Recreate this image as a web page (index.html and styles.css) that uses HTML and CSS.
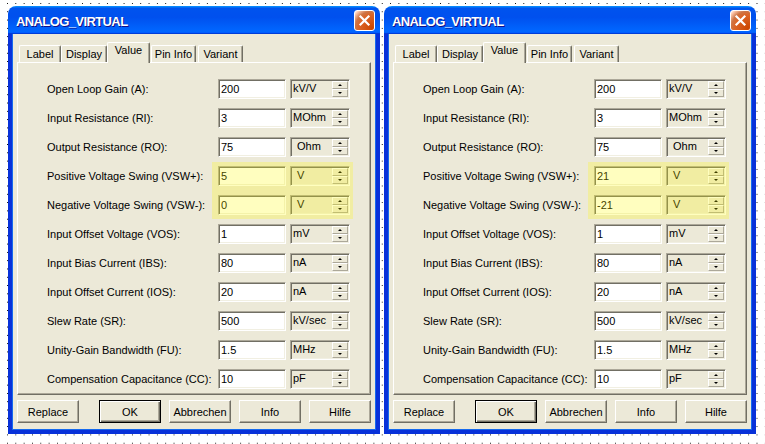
FILE: index.html
```html
<!DOCTYPE html>
<html lang="de">
<head>
  <meta charset="UTF-8" />
  <title>ANALOG_VIRTUAL</title>
  <link rel="stylesheet" href="styles.css">
</head>
<body>
  <div class="window">
    <div class="titlebar">
      <span class="title">ANALOG_VIRTUAL</span>
      <span class="close"><svg width="13" height="13" viewBox="0 0 13 13"><path d="M2.5 2.5 L10.5 10.5 M10.5 2.5 L2.5 10.5" stroke="#fff" stroke-width="2.2" stroke-linecap="square" fill="none"/></svg></span>
    </div>
    <div class="frame">
      <div class="tabs">
        <span class="tab tab-label">Label</span>
        <span class="tab tab-display">Display</span>
        <span class="tab tab-value active">Value</span>
        <span class="tab tab-pin">Pin Info</span>
        <span class="tab tab-variant">Variant</span>
      </div>
      <div class="panel">
        <div class="row"><label>Open Loop Gain (A):</label><input class="value" value="200"><div class="unit"><span>kV/V</span><span class="spin"><i class="up"></i><i class="down"></i></span></div></div>
        <div class="row"><label>Input Resistance (RI):</label><input class="value" value="3"><div class="unit"><span>MOhm</span><span class="spin"><i class="up"></i><i class="down"></i></span></div></div>
        <div class="row"><label>Output Resistance (RO):</label><input class="value" value="75"><div class="unit"><span class="pad">Ohm</span><span class="spin"><i class="up"></i><i class="down"></i></span></div></div>
        <div class="swing">
          <div class="row"><label>Positive Voltage Swing (VSW+):</label><input class="value" value="5"><div class="unit"><span class="pad">V</span><span class="spin"><i class="up"></i><i class="down"></i></span></div></div>
          <div class="row"><label>Negative Voltage Swing (VSW-):</label><input class="value" value="0"><div class="unit"><span class="pad">V</span><span class="spin"><i class="up"></i><i class="down"></i></span></div></div>
        </div>
        <div class="row"><label>Input Offset Voltage (VOS):</label><input class="value" value="1"><div class="unit"><span>mV</span><span class="spin"><i class="up"></i><i class="down"></i></span></div></div>
        <div class="row"><label>Input Bias Current (IBS):</label><input class="value" value="80"><div class="unit"><span>nA</span><span class="spin"><i class="up"></i><i class="down"></i></span></div></div>
        <div class="row"><label>Input Offset Current (IOS):</label><input class="value" value="20"><div class="unit"><span>nA</span><span class="spin"><i class="up"></i><i class="down"></i></span></div></div>
        <div class="row"><label>Slew Rate (SR):</label><input class="value" value="500"><div class="unit"><span>kV/sec</span><span class="spin"><i class="up"></i><i class="down"></i></span></div></div>
        <div class="row"><label>Unity-Gain Bandwidth (FU):</label><input class="value" value="1.5"><div class="unit"><span>MHz</span><span class="spin"><i class="up"></i><i class="down"></i></span></div></div>
        <div class="row"><label>Compensation Capacitance (CC):</label><input class="value" value="10"><div class="unit"><span>pF</span><span class="spin"><i class="up"></i><i class="down"></i></span></div></div>
      </div>
      <div class="buttons">
        <button>Replace</button>
        <button class="ok">OK</button>
        <button>Abbrechen</button>
        <button>Info</button>
        <button>Hilfe</button>
      </div>
    </div>
  </div>

  <div class="window">
    <div class="titlebar">
      <span class="title">ANALOG_VIRTUAL</span>
      <span class="close"><svg width="13" height="13" viewBox="0 0 13 13"><path d="M2.5 2.5 L10.5 10.5 M10.5 2.5 L2.5 10.5" stroke="#fff" stroke-width="2.2" stroke-linecap="square" fill="none"/></svg></span>
    </div>
    <div class="frame">
      <div class="tabs">
        <span class="tab tab-label">Label</span>
        <span class="tab tab-display">Display</span>
        <span class="tab tab-value active">Value</span>
        <span class="tab tab-pin">Pin Info</span>
        <span class="tab tab-variant">Variant</span>
      </div>
      <div class="panel">
        <div class="row"><label>Open Loop Gain (A):</label><input class="value" value="200"><div class="unit"><span>kV/V</span><span class="spin"><i class="up"></i><i class="down"></i></span></div></div>
        <div class="row"><label>Input Resistance (RI):</label><input class="value" value="3"><div class="unit"><span>MOhm</span><span class="spin"><i class="up"></i><i class="down"></i></span></div></div>
        <div class="row"><label>Output Resistance (RO):</label><input class="value" value="75"><div class="unit"><span class="pad">Ohm</span><span class="spin"><i class="up"></i><i class="down"></i></span></div></div>
        <div class="swing">
          <div class="row"><label>Positive Voltage Swing (VSW+):</label><input class="value" value="21"><div class="unit"><span class="pad">V</span><span class="spin"><i class="up"></i><i class="down"></i></span></div></div>
          <div class="row"><label>Negative Voltage Swing (VSW-):</label><input class="value" value="-21"><div class="unit"><span class="pad">V</span><span class="spin"><i class="up"></i><i class="down"></i></span></div></div>
        </div>
        <div class="row"><label>Input Offset Voltage (VOS):</label><input class="value" value="1"><div class="unit"><span>mV</span><span class="spin"><i class="up"></i><i class="down"></i></span></div></div>
        <div class="row"><label>Input Bias Current (IBS):</label><input class="value" value="80"><div class="unit"><span>nA</span><span class="spin"><i class="up"></i><i class="down"></i></span></div></div>
        <div class="row"><label>Input Offset Current (IOS):</label><input class="value" value="20"><div class="unit"><span>nA</span><span class="spin"><i class="up"></i><i class="down"></i></span></div></div>
        <div class="row"><label>Slew Rate (SR):</label><input class="value" value="500"><div class="unit"><span>kV/sec</span><span class="spin"><i class="up"></i><i class="down"></i></span></div></div>
        <div class="row"><label>Unity-Gain Bandwidth (FU):</label><input class="value" value="1.5"><div class="unit"><span>MHz</span><span class="spin"><i class="up"></i><i class="down"></i></span></div></div>
        <div class="row"><label>Compensation Capacitance (CC):</label><input class="value" value="10"><div class="unit"><span>pF</span><span class="spin"><i class="up"></i><i class="down"></i></span></div></div>
      </div>
      <div class="buttons">
        <button>Replace</button>
        <button class="ok">OK</button>
        <button>Abbrechen</button>
        <button>Info</button>
        <button>Hilfe</button>
      </div>
    </div>
  </div>
</body>
</html>
```

FILE: styles.css
```css
:root {
  --face: #ece9d8;
  --light: #ffffff;
  --shade: #aca899;
  --dark: #716f64;
  --xp-blue: #0831d9;
}

body {
  margin: 0;
  height: 444px;
  box-sizing: border-box;
  overflow: hidden;
  padding: 6px 0 0 8px;
  display: flex;
  align-items: flex-start;
  gap: 4px;
  background-color: #000;
  background-image:
    linear-gradient(90deg, transparent 1px, #fff 1px),
    linear-gradient(transparent 1px, #fff 1px);
  background-size: 8.33px 8.3px;
  background-position: 7px 3px;
  font-family: "Liberation Sans", Arial, sans-serif;
  font-size: 11px;
  color: #000;
}

.window {
  width: 372px;
  height: 428px;
  display: flex;
  flex-direction: column;
  flex: none;
}

.titlebar {
  height: 28px;
  flex: none;
  box-sizing: border-box;
  padding: 0 5px 0 8px;
  display: flex;
  align-items: center;
  justify-content: space-between;
  border-radius: 8px 8px 0 0;
  background: linear-gradient(180deg, #0997ff 0%, #0053ee 8%, #0050ee 40%, #0066ff 88%, #0066ff 93%, #005bff 95%, #003dd7 96%, #003dd7 100%);
}

.title {
  padding-top: 2px;
  color: #fff;
  font-size: 13px;
  font-weight: bold;
  letter-spacing: -0.6px;
  text-shadow: 1px 1px #0f1089;
}

.close {
  width: 21px;
  height: 21px;
  box-sizing: border-box;
  display: flex;
  align-items: center;
  justify-content: center;
  border: 1px solid #fff;
  border-radius: 3px;
  background: radial-gradient(circle at 90% 90%, #cc4600 0%, #dc6527 55%, #cd7546 70%, #ffccb2 90%, #fff 100%);
}

.frame {
  flex: 1;
  display: flex;
  flex-direction: column;
  padding: 8px 5px 7px;
  background: var(--face);
  border: 4px solid var(--xp-blue);
  border-top: 0;
  box-shadow: inset 1px 0 #166aee, inset -1px 0 #166aee, inset 0 -1px #166aee;
}

.tabs {
  height: 20px;
  display: flex;
  align-items: flex-end;
  padding-left: 2px;
}

.tab {
  height: 17px;
  box-sizing: border-box;
  text-align: center;
  line-height: 16px;
  border: 1px solid;
  border-color: var(--light) var(--dark) transparent var(--light);
  border-bottom: 0;
  border-radius: 2px 2px 0 0;
  box-shadow: inset -1px 0 var(--shade);
  background: var(--face);
}
.tab-label { width: 42px; }
.tab-display { width: 46px; }
.tab-value { width: 43px; margin-right: 1px; }
.tab-pin { width: 45px; margin-right: 2px; }
.tab-variant { width: 45px; }

.tab.active {
  height: 21px;
  margin-bottom: -1px;
  line-height: 15px;
  position: relative;
  z-index: 1;
}

.panel {
  height: 333px;
  box-sizing: border-box;
  padding: 16px 0 0 29px;
  display: flex;
  flex-direction: column;
  gap: 9px;
  border: 1px solid;
  border-color: var(--light) var(--dark) var(--dark) var(--light);
  box-shadow: inset -1px -1px var(--shade);
}

.row {
  height: 20px;
  display: flex;
  align-items: center;
}

.row label {
  width: 167px;
  margin-right: 4px;
}

.value {
  width: 68px;
  height: 20px;
  box-sizing: border-box;
  margin: 0 4px 0 0;
  padding: 0 2px;
  font: inherit;
  color: #000;
  background: #fff;
  border: 1px solid;
  border-color: var(--shade) var(--light) var(--light) var(--shade);
  box-shadow: inset 1px 1px var(--dark), inset -1px -1px #f1efe2;
  outline: none;
}

.unit {
  width: 60px;
  height: 20px;
  box-sizing: border-box;
  display: flex;
  align-items: center;
  justify-content: space-between;
  padding: 0 1px 0 1px;
  border: 1px solid;
  border-color: var(--shade) var(--light) var(--light) var(--shade);
  box-shadow: inset 1px 1px var(--dark), inset -1px -1px #f1efe2;
  background: var(--face);
}
.unit span:first-child {
  padding-left: 1px;
  margin-top: -3px;
}
.unit .pad {
  padding-left: 5px !important;
}

.spin {
  width: 16px;
  height: 16px;
  display: flex;
  flex-direction: column;
}
.spin i {
  flex: 1;
  display: flex;
  align-items: center;
  justify-content: center;
  border: 1px solid;
  border-color: var(--light) var(--shade) var(--shade) var(--light);
}
.spin i::after {
  content: "";
  border-left: 2px solid transparent;
  border-right: 2px solid transparent;
}
.spin .up::after { border-bottom: 2px solid #000; }
.spin .down::after { border-top: 2px solid #000; }

.swing {
  position: relative;
  display: flex;
  flex-direction: column;
  gap: 9px;
}
.swing::after {
  content: "";
  position: absolute;
  top: -4px;
  bottom: -4px;
  left: 165px;
  width: 141px;
  background: rgba(255, 250, 0, 0.25);
  pointer-events: none;
}

.buttons {
  display: flex;
  gap: 8px;
  margin-top: 5px;
}
.buttons button {
  width: 62px;
  height: 23px;
  box-sizing: border-box;
  padding: 0;
  font: inherit;
  color: #000;
  background: var(--face);
  border: 1px solid;
  border-color: var(--light) var(--dark) var(--dark) var(--light);
  box-shadow: inset -1px -1px var(--shade);
}
.buttons .ok {
  margin-left: auto;
  border-color: #000;
  box-shadow: inset 1px 1px var(--light), inset -1px -1px var(--dark), inset -2px -2px var(--shade);
}
```
